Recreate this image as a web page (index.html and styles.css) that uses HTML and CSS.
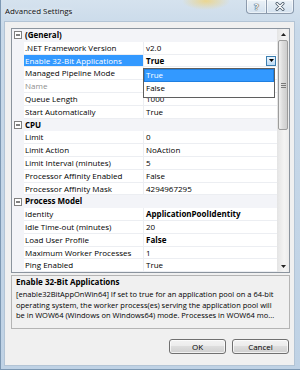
FILE: index.html
```html
<!DOCTYPE html>
<html lang="en">
<head>
<meta charset="UTF-8">
<title>Advanced Settings</title>
<link rel="stylesheet" href="styles.css">
</head>
<body>
<div class="window">
    <div class="titlebar">
        <span class="title">Advanced Settings</span>
        <div class="caption-buttons">
            <div class="caption-btn help">?</div>
            <div class="caption-btn close">
                <svg width="10" height="9" viewBox="0 0 10 9">
                    <path d="M2 1.5 L8 7.5 M8 1.5 L2 7.5" stroke="#4a5a6a" stroke-width="3" stroke-linecap="round"/>
                    <path d="M2 1.5 L8 7.5 M8 1.5 L2 7.5" stroke="#ffffff" stroke-width="1.4" stroke-linecap="round"/>
                </svg>
            </div>
        </div>
    </div>

    <div class="client">
        <div class="grid">
            <div class="rows">
                <div class="row category">
                    <span class="margin"><svg class="expander" width="8" height="8" viewBox="0 0 8 8"><rect x="0.5" y="0.5" width="7" height="7" fill="#fff" stroke="#808080"/><path d="M2 4 H6" stroke="#000"/></svg></span>
                    <span class="cat-label">(General)</span>
                </div>
                <div class="row"><span class="margin"></span><span class="name">.NET Framework Version</span><span class="value">v2.0</span></div>
                <div class="row selected">
                    <span class="margin"></span>
                    <span class="name">Enable 32-Bit Applications</span>
                    <span class="value"><b>True</b>
                        <span class="combo-btn"><svg width="5" height="3" viewBox="0 0 5 3"><polygon points="0,0 5,0 2.5,3" fill="#000"/></svg></span>
                    </span>
                </div>
                <!-- values of the next two rows are hidden under the open list -->
                <div class="row"><span class="margin"></span><span class="name">Managed Pipeline Mode</span><span class="value"></span></div>
                <div class="row"><span class="margin"></span><span class="name disabled">Name</span><span class="value"></span></div>
                <div class="row"><span class="margin"></span><span class="name">Queue Length</span><span class="value">1000</span></div>
                <div class="row"><span class="margin"></span><span class="name">Start Automatically</span><span class="value">True</span></div>
                <div class="row category">
                    <span class="margin"><svg class="expander" width="8" height="8" viewBox="0 0 8 8"><rect x="0.5" y="0.5" width="7" height="7" fill="#fff" stroke="#808080"/><path d="M2 4 H6" stroke="#000"/></svg></span>
                    <span class="cat-label">CPU</span>
                </div>
                <div class="row"><span class="margin"></span><span class="name">Limit</span><span class="value">0</span></div>
                <div class="row"><span class="margin"></span><span class="name">Limit Action</span><span class="value">NoAction</span></div>
                <div class="row"><span class="margin"></span><span class="name">Limit Interval (minutes)</span><span class="value">5</span></div>
                <div class="row"><span class="margin"></span><span class="name">Processor Affinity Enabled</span><span class="value">False</span></div>
                <div class="row"><span class="margin"></span><span class="name">Processor Affinity Mask</span><span class="value">4294967295</span></div>
                <div class="row category">
                    <span class="margin"><svg class="expander" width="8" height="8" viewBox="0 0 8 8"><rect x="0.5" y="0.5" width="7" height="7" fill="#fff" stroke="#808080"/><path d="M2 4 H6" stroke="#000"/></svg></span>
                    <span class="cat-label">Process Model</span>
                </div>
                <div class="row"><span class="margin"></span><span class="name">Identity</span><span class="value"><b>ApplicationPoolIdentity</b></span></div>
                <div class="row"><span class="margin"></span><span class="name">Idle Time-out (minutes)</span><span class="value">20</span></div>
                <div class="row"><span class="margin"></span><span class="name">Load User Profile</span><span class="value"><b>False</b></span></div>
                <div class="row"><span class="margin"></span><span class="name">Maximum Worker Processes</span><span class="value">1</span></div>
                <div class="row"><span class="margin"></span><span class="name">Ping Enabled</span><span class="value">True</span></div>
            </div>

            <div class="scrollbar">
                <div class="sb-btn"><svg width="5" height="3" viewBox="0 0 5 3"><polygon points="0,3 5,3 2.5,0" fill="#222"/></svg></div>
                <div class="sb-track">
                    <div class="sb-thumb"><span class="grip"></span></div>
                </div>
                <div class="sb-btn"><svg width="5" height="3" viewBox="0 0 5 3"><polygon points="0,0 5,0 2.5,3" fill="#222"/></svg></div>
            </div>

            <!-- open combo list for Enable 32-Bit Applications -->
            <div class="combo-list">
                <div class="combo-item active">True</div>
                <div class="combo-item">False</div>
            </div>
        </div>

        <div class="description">
            <div class="desc-title">Enable 32-Bit Applications</div>
            <div class="desc-line">[enable32BitAppOnWin64] If set to true for an application pool on a 64-bit</div>
            <div class="desc-line">operating system, the worker process(es) serving the application pool will</div>
            <div class="desc-line">be in WOW64 (Windows on Windows64) mode. Processes in WOW64 mo...</div>
        </div>

        <div class="buttons">
            <div class="btn">OK</div>
            <div class="btn">Cancel</div>
        </div>
    </div>
</div>
</body>
</html>
```

FILE: styles.css
```css
html, body {
    margin: 0;
    padding: 0;
    background-color: #c4d6e8;
}

.window {
    width: 300px;
    height: 370px;
    box-sizing: border-box;
    display: flex;
    flex-direction: column;
    border-left: 1px solid #7d98b3;
    border-bottom: 1px solid #7d98b3;
    background:
        radial-gradient(ellipse 24px 9px at 205px 1px, rgba(238, 212, 130, 0.85), rgba(238, 212, 130, 0)),
        linear-gradient(#d5e2ee, #c8d9e9 30px, #bfd2e5);
    font-family: "Open Sans", "Noto Sans", sans-serif;
    color: #000;
}

/* title bar */
.titlebar {
    height: 22px;
    display: flex;
    align-items: flex-start;
    flex: none;
}

.title {
    padding-left: 4px;
    line-height: 22px;
    font-size: 7.9px;
    color: #111;
    text-shadow: 0 0 4px rgba(255, 255, 255, 0.9);
}

.caption-buttons {
    margin-left: auto;
    margin-right: 6px;
    display: flex;
    height: 14px;
}

.caption-btn {
    height: 14px;
    box-sizing: border-box;
    display: flex;
    align-items: center;
    justify-content: center;
    border: 1px solid rgba(70, 90, 115, 0.55);
    border-top: none;
    background: linear-gradient(rgba(255, 255, 255, 0.55), rgba(214, 228, 242, 0.6));
    box-shadow: inset 0 0 0 1px rgba(255, 255, 255, 0.5);
}

.help {
    width: 20px;
    border-right: none;
    border-bottom-left-radius: 4px;
    font-size: 9px;
    font-weight: 700;
    color: #fff;
    text-shadow: 0 0 1px #3a4a5c, 0 0 1px #3a4a5c, 0 0 1px #3a4a5c;
}

.close {
    width: 28px;
    border-bottom-right-radius: 4px;
}

/* client area */
.client {
    flex: 1;
    margin: 0 6px 4px 4px;
    padding: 6px 4px 0 6px;
    background-color: #f0f0f0;
    box-shadow: 0 0 0 1px #b3c4d5;
    display: flex;
    flex-direction: column;
}

.grid {
    position: relative;
    display: flex;
    height: 243.2px;
    border: 1px solid #8b949e;
    background-color: #fff;
    flex: none;
}

.rows {
    flex: 1;
    display: flex;
    flex-direction: column;
}

.row {
    display: flex;
    height: 12.8px;
    line-height: 12.8px;
    font-size: 8px;
    white-space: nowrap;
    flex: none;
}

.margin {
    width: 12px;
    flex: none;
    background-color: #f3f4f8;
    display: flex;
    align-items: center;
    justify-content: center;
}

.expander {
    display: block;
}

.name {
    width: 119px;
    flex: none;
    box-sizing: border-box;
    padding-left: 1px;
    overflow: hidden;
    box-shadow: inset 0 -1px #eceef2;
}

.value {
    flex: 1;
    display: flex;
    align-items: center;
    padding-left: 2px;
    border-left: 1px solid #eceef2;
    box-shadow: inset 0 -1px #eceef2;
}

.disabled {
    color: #8e8e8e;
}

.category {
    background-color: #f3f4f8;
}

.cat-label {
    padding-left: 1px;
    font-weight: 700;
}

.selected .name {
    background-color: #3399ff;
    color: #fff;
}

.combo-btn {
    width: 10px;
    height: 10px;
    box-sizing: border-box;
    margin-left: auto;
    margin-right: 1px;
    border: 1px solid #3c7fb1;
    background: linear-gradient(#eaf5fd, #bfdcf5);
    display: flex;
    align-items: center;
    justify-content: center;
}

.combo-list {
    position: absolute;
    left: 131px;
    top: 39px;
    width: 132px;
    height: 30px;
    box-sizing: border-box;
    border: 1px solid #5f5f5f;
    background-color: #fff;
    font-size: 8px;
}

.combo-item {
    height: 12.8px;
    line-height: 12.8px;
    padding-left: 2px;
}

.combo-item.active {
    background-color: #3399ff;
    color: #fff;
    box-shadow: inset 0 0 0 1px #1f7fe0;
}

/* scroll bar */
.scrollbar {
    width: 12px;
    flex: none;
    display: flex;
    flex-direction: column;
    background: linear-gradient(to right, #e4e4e4, #f4f4f4 60%, #ececec);
}

.sb-btn {
    height: 11px;
    flex: none;
    display: flex;
    align-items: center;
    justify-content: center;
}

.sb-track {
    flex: 1;
}

.sb-thumb {
    height: 90px;
    margin: 0 1px;
    box-sizing: border-box;
    border: 1px solid #9c9c9c;
    border-radius: 2px;
    background: linear-gradient(to right, #f2f2f2, #dcdcdc 45%, #cdcdcd);
    display: flex;
    align-items: center;
    justify-content: center;
}

.grip {
    width: 5px;
    height: 5px;
    background: repeating-linear-gradient(#7a7a7a 0, #7a7a7a 1px, transparent 1px, transparent 2px);
}

/* description panel */
.description {
    margin-top: 2px;
    height: 54px;
    box-sizing: border-box;
    padding: 0 4px;
    border: 1px solid #b4b4b4;
    font-size: 7.5px;
    white-space: nowrap;
    overflow: hidden;
    flex: none;
}

.desc-title {
    font-weight: 700;
    font-size: 8px;
    line-height: 9px;
    margin-top: 1px;
    margin-bottom: 3px;
}

.desc-line {
    line-height: 10.5px;
}

/* dialog buttons */
.buttons {
    display: flex;
    justify-content: flex-end;
    gap: 6px;
    margin-top: 10px;
    padding-right: 1px;
}

.btn {
    width: 57px;
    height: 15px;
    box-sizing: border-box;
    border: 1px solid #707070;
    border-radius: 3px;
    background: linear-gradient(#f3f3f3, #ebebeb 50%, #dddddd 50%, #cfcfcf);
    box-shadow: inset 0 0 0 1px rgba(255, 255, 255, 0.7);
    font-size: 8px;
    line-height: 13px;
    text-align: center;
}
```
